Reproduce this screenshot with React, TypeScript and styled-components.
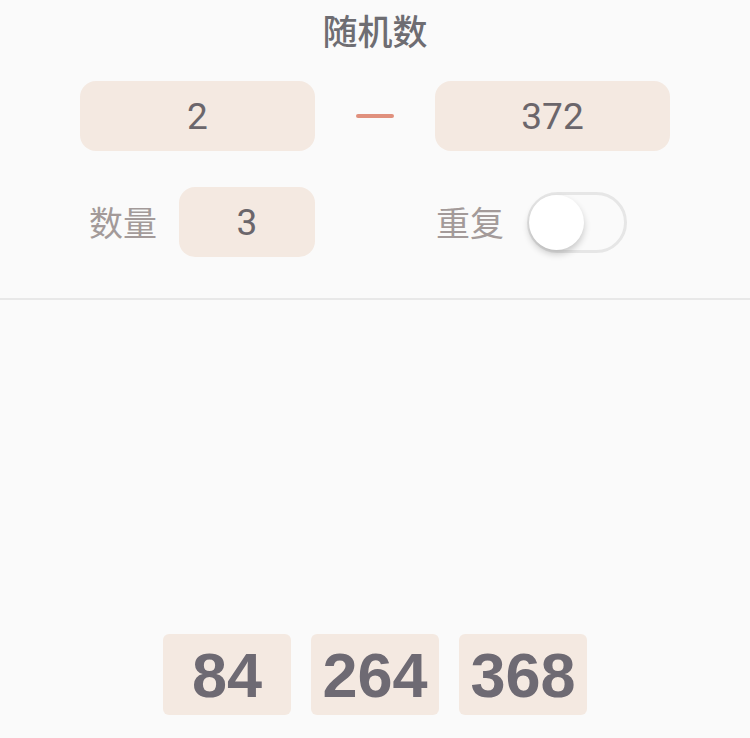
import * as React from "react";
import styled, { createGlobalStyle } from "styled-components";

const GlobalStyle = createGlobalStyle`
  html, body {
    margin: 0;
    padding: 0;
    background: #fafafa;
  }
  body {
    font-family: Roboto, "Noto Sans CJK SC", sans-serif;
  }
`;

const Page = styled.div`
  width: 750px;
  height: 738px;
  display: flex;
  flex-direction: column;
  background: #fafafa;
  overflow: hidden;
`;

const Settings = styled.div`
  height: 298px;
  border-bottom: 2px solid #e8e8e8;
  display: flex;
  flex-direction: column;
  align-items: center;
`;

const Title = styled.h1`
  margin: 12px 0 0;
  font-family: "Noto Sans CJK SC", sans-serif;
  font-size: 35px;
  line-height: 36px;
  font-weight: 500;
  color: #6e6d72;
`;

const RangeRow = styled.div`
  margin-top: 33px;
  width: 590px;
  display: flex;
  align-items: center;
  justify-content: space-between;
`;

const Field = styled.div<{ $width: number }>`
  width: ${p => p.$width}px;
  height: 70px;
  border-radius: 16px;
  background: #f4e9e1;
  display: flex;
  align-items: center;
  justify-content: center;
  font-family: Roboto, sans-serif;
  font-size: 37px;
  color: #6b666b;
`;

const Dash = styled.div`
  width: 38px;
  height: 4px;
  border-radius: 2px;
  background: #e0907d;
`;

const OptionRow = styled.div`
  margin-top: 36px;
  align-self: stretch;
  padding-left: 89px;
  display: flex;
  align-items: center;
`;

const Group = styled.div<{ $gap: number }>`
  display: flex;
  align-items: center;
  gap: ${p => p.$gap}px;
`;

const Label = styled.span`
  font-family: "Noto Sans CJK SC", sans-serif;
  font-size: 34px;
  line-height: 40px;
  color: #a39a99;
`;

const Spacer = styled.div`
  width: 121px;
`;

const Track = styled.div`
  position: relative;
  width: 100px;
  height: 61px;
  box-sizing: border-box;
  border: 3px solid #e6e6e6;
  border-radius: 31px;
  background: #fafafa;
`;

const Knob = styled.div`
  position: absolute;
  left: -1px;
  top: 0;
  width: 55px;
  height: 55px;
  border-radius: 50%;
  background: #ffffff;
  box-shadow: 0 4px 7px rgba(0, 0, 0, 0.2);
`;

const Results = styled.div`
  flex: 1;
  display: flex;
  justify-content: center;
  align-items: flex-end;
  gap: 20px;
  padding-bottom: 23px;
`;

const Result = styled.div`
  width: 128px;
  height: 81px;
  border-radius: 6px;
  background: #f4e9e1;
  display: flex;
  align-items: center;
  justify-content: center;
  font-family: "Liberation Sans", Arial, sans-serif;
  font-weight: 700;
  font-size: 63px;
  color: #6e6a73;
`;

const results = [84, 264, 368];

export default function App() {
  return (
    <Page>
      <GlobalStyle />
      <Settings>
        <Title>随机数</Title>
        <RangeRow>
          <Field $width={235}>2</Field>
          <Dash />
          <Field $width={235}>372</Field>
        </RangeRow>
        <OptionRow>
          <Group $gap={22}>
            <Label>数量</Label>
            <Field $width={136}>3</Field>
          </Group>
          <Spacer />
          <Group $gap={23}>
            <Label>重复</Label>
            <Track>
              <Knob />
            </Track>
          </Group>
        </OptionRow>
      </Settings>
      <Results>
        {results.map(n => (
          <Result key={n}>{n}</Result>
        ))}
      </Results>
    </Page>
  );
}
